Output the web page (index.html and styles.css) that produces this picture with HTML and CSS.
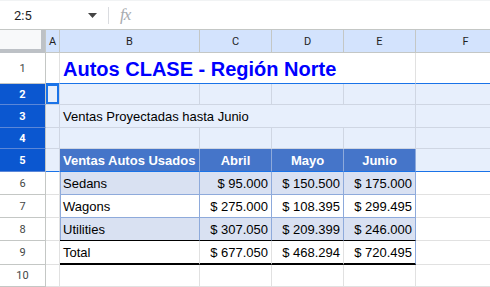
FILE: index.html
```html
<!DOCTYPE html>
<html lang="es">
<head>
<meta charset="utf-8">
<link rel="stylesheet" href="styles.css">
</head>
<body>
<div class="toolbar">
  <span class="namebox">2:5</span>
  <svg class="caret" width="9" height="5" viewBox="0 0 9 5"><path d="M0 0h9L4.5 5z" fill="#444"/></svg>
  <span class="sep"></span>
  <span class="fx">fx</span>
</div>
<div class="viewport">
<div class="sheet">
  <div class="corner"></div>
  <div class="ch">A</div><div class="ch">B</div><div class="ch">C</div><div class="ch">D</div><div class="ch">E</div><div class="ch">F</div>

  <div class="rh">1</div><div class="c selstart"></div><div class="c title span4 selstart">Autos CLASE - Región Norte</div><div class="c selstart"></div>

  <div class="rh sel">2</div><div class="c s active"></div><div class="c s"></div><div class="c s"></div><div class="c s"></div><div class="c s"></div><div class="c s"></div>

  <div class="rh sel">3</div><div class="c s"></div><div class="c s span4 txt">Ventas Proyectadas hasta Junio</div><div class="c s"></div>

  <div class="rh sel">4</div><div class="c s"></div><div class="c s"></div><div class="c s"></div><div class="c s"></div><div class="c s"></div><div class="c s"></div>

  <div class="rh sel">5</div><div class="c s selend"></div><div class="c th left">Ventas Autos Usados</div><div class="c th">Abril</div><div class="c th">Mayo</div><div class="c th last">Junio</div><div class="c s selend"></div>

  <div class="rh">6</div><div class="c"></div><div class="c d band first txt">Sedans</div><div class="c d band num">$ 95.000</div><div class="c d band num">$ 150.500</div><div class="c d band num last">$ 175.000</div><div class="c"></div>

  <div class="rh">7</div><div class="c"></div><div class="c d first txt">Wagons</div><div class="c d num">$ 275.000</div><div class="c d num">$ 108.395</div><div class="c d num last">$ 299.495</div><div class="c"></div>

  <div class="rh">8</div><div class="c"></div><div class="c d band first txt pretotal">Utilities</div><div class="c d band num pretotal">$ 307.050</div><div class="c d band num pretotal">$ 209.399</div><div class="c d band num last pretotal">$ 246.000</div><div class="c"></div>

  <div class="rh">9</div><div class="c"></div><div class="c tot txt">Total</div><div class="c tot num">$ 677.050</div><div class="c tot num">$ 468.294</div><div class="c tot num last">$ 720.495</div><div class="c"></div>

  <div class="rh">10</div><div class="c"></div><div class="c"></div><div class="c"></div><div class="c"></div><div class="c"></div><div class="c"></div>
</div>
</div>
</body>
</html>
```

FILE: styles.css
```css
* { box-sizing: border-box; }
html, body { margin: 0; padding: 0; background: #fff; overflow: hidden; }
body { width: 490px; height: 287px; font-family: "Liberation Sans", Arial, sans-serif; }

.toolbar {
  height: 29px;
  display: flex;
  align-items: center;
  border-top: 1px solid #f1f3f4;
}
.namebox { margin-left: 14px; width: 74px; font-size: 13px; color: #1f1f1f; font-family: Roboto, "Liberation Sans", sans-serif; }
.caret { margin-top: 1px; }
.sep { width: 1px; height: 17px; background: #dadce0; margin-left: 11px; }
.fx { margin-left: 11px; font-family: "Liberation Serif", serif; font-style: italic; font-size: 17px; color: #a8abaf; letter-spacing: -1px; }

.viewport { width: 490px; height: 258px; overflow: hidden; }
.sheet {
  display: grid;
  grid-template-columns: 46px 14px 140px 72px 72px 72px 100px;
  grid-template-rows: 24px 31px 21px 23px 21px 23px 23px 23px 23px 24px 22px;
  width: 516px;
}
.corner {
  background: #f8f9fa;
  border-top: 1px solid #c4c7c5;
  box-shadow: inset -4px -4px 0 #bdc1c6;
  border-right: 1px solid #c4c7c5;
}
.ch {
  background: #d3e3fd;
  border-top: 1px solid #c4c7c5;
  border-right: 1px solid #c4c7c5;
  border-bottom: 1px solid #c4c7c5;
  font-size: 11px;
  color: #1f1f1f;
  display: flex; align-items: center; justify-content: center;
  font-family: Roboto, "Liberation Sans", sans-serif;
}
.rh {
  border-right: 1px solid #c4c7c5;
  border-bottom: 1px solid #c4c7c5;
  font-size: 11px;
  color: #444746;
  display: flex; align-items: center; justify-content: center;
  font-family: Roboto, "Liberation Sans", sans-serif;
  background: #fff;
}
.rh.sel { background: #0b57d0; color: #fff; font-weight: bold; border-bottom-color: #5b87d8; }

.c {
  border-right: 1px solid #e1e1e1;
  border-bottom: 1px solid #e1e1e1;
  font-family: "Liberation Sans", Arial, sans-serif;
  font-size: 13px;
  color: #000;
  display: flex; align-items: center;
  white-space: nowrap;
  min-width: 0;
}
.span4 { grid-column: span 4; }
.title { color: #0000ff; font-weight: bold; font-size: 20px; padding-left: 3px; padding-top: 2px; }
.txt { padding-left: 3px; }

.c.s { background: #e7effc; border-right-color: #cfd6e3; border-bottom-color: #cfd6e3; }
.c.selstart { border-bottom: 1px solid #1a73e8; }
.c.active { box-shadow: inset 0 0 0 2px #1a73e8; }

.th {
  background: #4575c9;
  color: #fff;
  font-weight: bold;
  justify-content: center;
  border-right: 1px solid #8eaadb;
  border-bottom: 1px solid #1a73e8;
}
.th.left { justify-content: flex-start; padding-left: 3px; }
.c.selend { border-bottom: 1px solid #1a73e8; }

.d { border-right: 1px solid #8eaadb; border-bottom: 1px solid #8eaadb; }
.d.band { background: #d9e1f2; }
.d.first { box-shadow: inset 1px 0 0 #8eaadb; }
.d.pretotal { border-bottom-color: #000; }
.num { justify-content: flex-end; padding-right: 3px; }

.tot { border-right: 1px solid #e1e1e1; border-bottom: 2px solid #000; }
.tot.last { border-right: 1px solid #8eaadb; }
```
